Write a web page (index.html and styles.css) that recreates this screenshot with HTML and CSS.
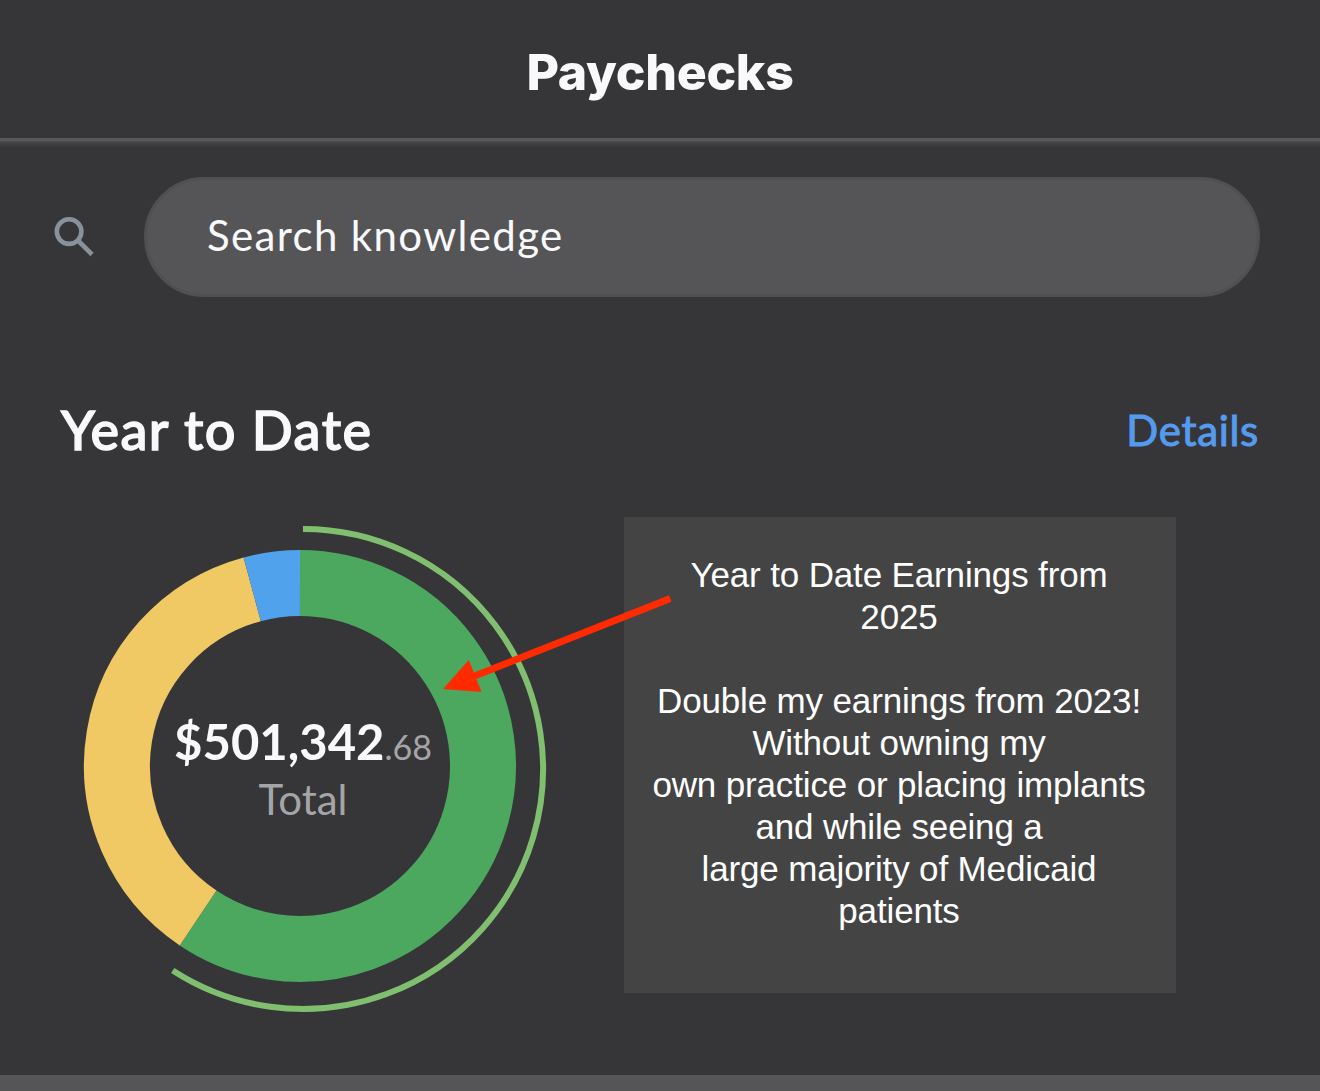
FILE: index.html
```html
<!DOCTYPE html>
<html lang="en">
<head>
    <meta charset="UTF-8">
    <meta name="viewport" content="width=device-width, initial-scale=1.0">
    <title>Paychecks</title>
    <link rel="stylesheet" href="styles.css">
</head>
<body>
    <header class="title-bar">
        <h1>Paychecks</h1>
    </header>

    <div class="search">
        <svg class="search-icon" viewBox="0 0 40 40">
            <circle cx="15.1" cy="14.6" r="12.3" />
            <path d="M24 23.5 L38 37.5" />
        </svg>
        <div class="search-field"><span class="search-text">Search knowledge</span></div>
    </div>

    <div class="section-header">
        <h2><span class="section-title">Year to Date</span></h2>
        <a class="details">Details</a>
    </div>

    <main class="summary">
        <div class="chart">
            <svg class="donut" viewBox="60 517 500 500">
                <!-- ring slices -->
                <g class="ring">
                    <path class="green" d="M300 583 A183 183 0 1 1 198.1 918" />
                    <path class="yellow" d="M198.1 918 A183 183 0 0 1 252.2 589.3" />
                    <path class="blue" d="M252.2 589.3 A183 183 0 0 1 300 583" />
                </g>
                <!-- selected slice marker -->
                <path class="marker" d="M303 529 A240 240 0 1 1 172.7 970.5" />
            </svg>
            <div class="total">
                <div class="amount"><span class="dollars">$501,342</span><span class="cents">.68</span></div>
                <div class="total-label">Total</div>
            </div>
        </div>

        <div class="note">
            Year to Date Earnings from<br>
            2025<br>
            <br>
            Double my earnings from 2023!<br>
            Without owning my<br>
            own practice or placing implants<br>
            and while seeing a<br>
            large majority of Medicaid<br>
            patients
        </div>

        <svg class="arrow" viewBox="440 590 240 110">
            <path class="shaft" d="M670.3 598.5 L472 677" />
            <polygon points="443,689 468.8,660 481.5,692" />
        </svg>
    </main>

    <div class="divider"></div>
</body>
</html>
```
FILE: styles.css
```css
* {
    box-sizing: border-box;
}

body {
    margin: 0;
    height: 1091px;
    overflow: hidden;
    display: flex;
    flex-direction: column;
    color: #f9f9fc;
    background-color: #363638;
    font-family: Lato, sans-serif;
}

h1, h2 {
    margin: 0;
}

/* Title bar */
.title-bar {
    height: 150px;
    flex: none;
    padding-top: 41px;
    text-align: center;
    background: linear-gradient(#59595b, #59595b 3px, #454547 4px, #363638 10px) 0 138px / 100% 12px no-repeat;
}

h1 {
    font-family: Inter, sans-serif;
    font-size: 50px;
    font-weight: 800;
    line-height: 62px;
    letter-spacing: -0.3px;
}

/* Search */
.search {
    display: flex;
    align-items: center;
    padding: 27px 60px 0 54px;
}

.search-icon {
    width: 40px;
    height: 40px;
    margin-right: 50px;
    fill: none;
    stroke: #89929c;
    stroke-width: 4.6;
}

.search-field {
    flex: 1;
    height: 120px;
    padding-left: 60px;
    border: 3px solid #505052;
    border-radius: 60px;
    background-color: #555557;
    font-size: 42px;
    line-height: 111px;
    letter-spacing: 1.35px;
}

/* Section header */
.section-header {
    display: flex;
    justify-content: space-between;
    align-items: flex-start;
    height: 220px;
    padding: 98px 61px 0 61px;
}

h2 {
    font-size: 54px;
    font-weight: 500;
    line-height: 70px;
    letter-spacing: 1.4px;
    -webkit-text-stroke: 1.4px;
}

.details {
    color: #549bef;
    font-size: 42px;
    line-height: 70px;
    letter-spacing: 0.7px;
    -webkit-text-stroke: 1px;
}

/* Chart and note */
.summary {
    position: relative;
    display: flex;
    align-items: flex-start;
    height: 558px;
    padding-left: 60px;
}

.chart {
    display: grid;
    width: 564px;
}

.donut {
    grid-area: 1 / 1;
    width: 500px;
    height: 500px;
}

.ring {
    fill: none;
    stroke-width: 66;
}

.green {
    stroke: #4ca75f;
}

.yellow {
    stroke: #f0c965;
}

.blue {
    stroke: #4fa2eb;
}

.marker {
    fill: none;
    stroke: #80bf70;
    stroke-width: 6;
}

.total {
    grid-area: 1 / 1;
    width: 486px;
    padding-top: 194px;
    text-align: center;
    color: #a5a5a7;
}

.amount {
    line-height: 60px;
}

.dollars {
    color: #f9f9fc;
    font-size: 49px;
    font-weight: 700;
}

.cents {
    font-size: 34px;
}

.total-label {
    font-size: 42px;
    line-height: 31px;
}

.note {
    width: 552px;
    height: 476px;
    padding: 37px 2px 0 0;
    text-align: center;
    color: #fff;
    background-color: #444;
    font-family: "Liberation Sans", sans-serif;
    font-size: 35px;
    line-height: 42px;
    letter-spacing: -0.15px;
}

.arrow {
    position: absolute;
    left: 440px;
    top: 73px;
    width: 240px;
    height: 110px;
    fill: #ff2a00;
}

.shaft {
    stroke: #ff2a00;
    stroke-width: 7;
}

.divider {
    height: 16px;
    flex: none;
    background-color: #555557;
}
```
